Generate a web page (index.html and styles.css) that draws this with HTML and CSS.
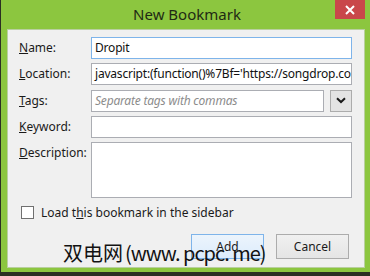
FILE: index.html
```html
<!DOCTYPE html>
<html lang="en">
<head>
    <meta charset="UTF-8">
    <title>New Bookmark</title>
    <link rel="stylesheet" href="styles.css">
</head>
<body>
    <div class="window">
        <div class="titlebar">
            <span class="title">New Bookmark</span>
            <div class="close">
                <svg width="10" height="10" viewBox="0 0 10 10">
                    <path d="M1 1 L9 9 M9 1 L1 9" stroke="#fff" stroke-width="2"/>
                </svg>
            </div>
        </div>
        <div class="panel">
            <div class="form">
                <label class="label"><u>N</u>ame:</label>
                <div class="field focused">Dropit</div>

                <label class="label"><u>L</u>ocation:</label>
                <div class="field">javascript:(function()%7Bf='https://songdrop.com/bookmarklet</div>

                <label class="label"><u>T</u>ags:</label>
                <div class="tags-row">
                    <div class="field placeholder">Separate tags with commas</div>
                    <div class="dropdown">
                        <svg width="10" height="7" viewBox="0 0 10 7">
                            <path d="M1 1.2 L5 5 L9 1.2" fill="none" stroke="#1a1a1a" stroke-width="2"/>
                        </svg>
                    </div>
                </div>

                <label class="label"><u>K</u>eyword:</label>
                <div class="field"></div>

                <label class="label"><u>D</u>escription:</label>
                <div class="field textarea"></div>
            </div>

            <div class="check-row">
                <span class="checkbox"></span>
                <span>Load t<u>h</u>is bookmark in the sidebar</span>
            </div>

            <div class="buttons">
                <div class="button default">Add</div>
                <div class="button">Cancel</div>
            </div>

            <div class="watermark">双电网<span class="latin">(www. pcpc. me)</span></div>
        </div>
    </div>
</body>
</html>
```

FILE: styles.css
```css
body {
    margin: 0;
    width: 370px;
    height: 276px;
    background-color: #2b2f22;
    font-family: "Noto Sans", "Open Sans", sans-serif;
    overflow: hidden;
}
.window {
    height: 272px;
    margin-left: 1px;
    background-color: #8cc63f;
    display: flex;
    flex-direction: column;
    padding: 0 5px 4px 6px;
    box-sizing: border-box;
    position: relative;
}
.titlebar {
    height: 29px;
    display: flex;
    align-items: center;
    justify-content: center;
}
.title {
    font-size: 15px;
    color: #1f2a14;
    margin-top: -2px;
    margin-left: 2px;
}
.close {
    position: absolute;
    top: 0;
    right: 5px;
    width: 30px;
    height: 19px;
    background-color: #c9474a;
    display: flex;
    align-items: center;
    justify-content: center;
}
.panel {
    flex: 1;
    background-color: #f0f0f0;
    border: 1px solid #b9cf9f;
    padding: 7px 12px 0 11px;
    position: relative;
}
.form {
    display: grid;
    grid-template-columns: 72px 1fr;
    row-gap: 4.33px;
}
.label {
    font-size: 12px;
    line-height: 22px;
    color: #1a1a1a;
    align-self: start;
}
.field {
    height: 22px;
    box-sizing: border-box;
    border: 1px solid #abadb3;
    background-color: #fff;
    font-size: 12px;
    line-height: 20px;
    padding: 0 3px;
    color: #111;
    white-space: nowrap;
    overflow: hidden;
    letter-spacing: -0.2px;
}
.field.focused {
    border-color: #7eb4ea;
}
.field.placeholder {
    color: #8c8c8c;
    font-style: italic;
    flex: 1;
}
.field.textarea {
    height: 56px;
}
.tags-row {
    display: flex;
    gap: 6px;
}
.dropdown {
    width: 22px;
    height: 22px;
    box-sizing: border-box;
    border: 1px solid #acacac;
    background-color: #e3e3e3;
    display: flex;
    align-items: center;
    justify-content: center;
}
.check-row {
    display: flex;
    align-items: center;
    gap: 7px;
    margin-top: 6px;
    padding-left: 2px;
    font-size: 12px;
    color: #1a1a1a;
}
.checkbox {
    width: 13px;
    height: 13px;
    box-sizing: border-box;
    border: 1px solid #707070;
    background-color: #fff;
}
.buttons {
    display: flex;
    justify-content: flex-end;
    gap: 12px;
    margin-top: 13px;
    margin-right: 3px;
}
.button {
    width: 73px;
    height: 25px;
    box-sizing: border-box;
    border: 1px solid #acacac;
    background: linear-gradient(#f0f0f0, #e5e5e5);
    font-size: 12px;
    line-height: 23px;
    text-align: center;
    color: #1a1a1a;
}
.button.default {
    border-color: #7eb4ea;
    background: linear-gradient(#ecf4fc, #dcecfc);
}
.watermark {
    position: absolute;
    left: 55px;
    top: 211px;
    font-family: "Noto Sans CJK SC", sans-serif;
    font-size: 20px;
    line-height: 24px;
    color: #121212;
    white-space: nowrap;
}
.latin {
    letter-spacing: -1px;
    margin-left: 2px;
}
```
